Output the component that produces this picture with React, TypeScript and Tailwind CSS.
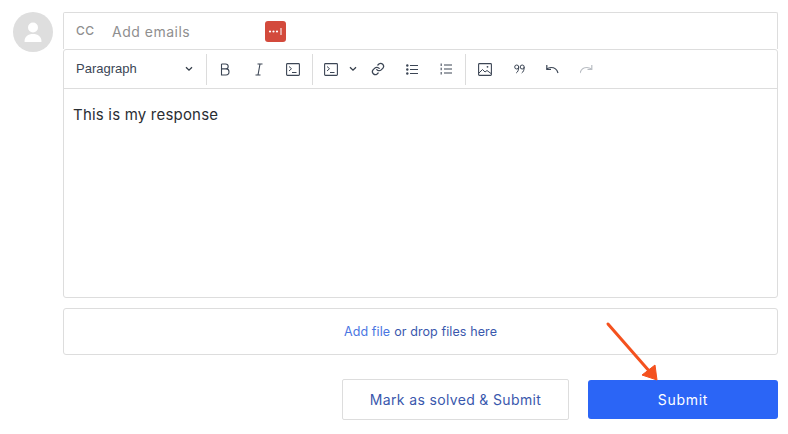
import type { ReactNode } from 'react'

const font = { fontFamily: 'Inter, "Open Sans", sans-serif' }

function ToolButton({ children }: { children: ReactNode }) {
  return <div className="w-[34px] h-full flex items-center justify-center text-[#3c4655]">{children}</div>
}

function Divider() {
  return <div className="w-px h-[31px] mx-[1px] bg-[#dcdcdc]" />
}

function Chevron() {
  return (
    <svg width="8" height="6" viewBox="0 0 8 6" fill="none">
      <path d="M1 1.2L4 4.2L7 1.2" stroke="#333c48" strokeWidth="1.3" />
    </svg>
  )
}

function TerminalIcon() {
  return (
    <svg width="14" height="13" viewBox="0 0 14 13" fill="none" stroke="currentColor">
      <rect x="0.6" y="0.6" width="12.8" height="11.8" rx="0.8" strokeWidth="1.1" />
      <path d="M3 3.5L5.5 5.7L3 8" strokeWidth="1" />
      <path d="M6 9.5H10.5" strokeWidth="1" />
    </svg>
  )
}

export default function App() {
  return (
    <div className="w-[788px] h-[434px] bg-white relative overflow-hidden pt-3 pl-[13px] pr-[10px] flex gap-[10px]" style={font}>
      {/* Avatar */}
      <div className="w-10 h-10 rounded-full bg-[#dedede] flex items-center justify-center shrink-0">
        <svg width="20" height="22" viewBox="0 0 20 22" fill="white">
          <circle cx="10" cy="6.5" r="5" />
          <path d="M1.5 20.5C1.5 15.5 5 13 10 13C15 13 18.5 15.5 18.5 20.5C18.5 21 18 21 17.5 21H2.5C2 21 1.5 21 1.5 20.5Z" />
        </svg>
      </div>

      <div className="flex-1 flex flex-col">
        {/* CC row */}
        <div className="h-[37px] border border-b-0 border-[#dddddd] flex items-center pl-[12px] rounded-t-[2px]">
          <span className="text-[12px] font-medium text-[#8f8f8f] tracking-[0.5px] w-[36px]">CC</span>
          <span className="text-[14px] text-[#8f8f8f] tracking-[0.5px] w-[153px]">Add emails</span>
          <div className="w-[21px] h-[21px] rounded-[3px] bg-[#d34a3c] flex items-center justify-center">
            <svg width="15" height="7" viewBox="0 0 15 7" fill="white">
              <circle cx="2" cy="3.5" r="1.1" />
              <circle cx="5.5" cy="3.5" r="1.1" />
              <circle cx="9" cy="3.5" r="1.1" />
              <rect x="12.5" y="0" width="1" height="7" />
            </svg>
          </div>
        </div>

        {/* Editor */}
        <div className="h-[249px] border border-[#dddddd] rounded-[3px] flex flex-col">
          <div className="h-[39px] border-b border-[#dddddd] flex items-center shrink-0">
            <div className="w-[141px] flex items-center justify-between pl-[12px] pr-[12px]">
              <span className="text-[13px] text-[#3c4655]" style={{ fontFamily: '"Liberation Sans", sans-serif' }}>Paragraph</span>
              <Chevron />
            </div>
            <Divider />
            <ToolButton>
              <svg width="10" height="13" viewBox="0 0 10 13" fill="none" stroke="currentColor" strokeWidth="1.1">
                <path d="M1.5 1H5.5C7.3 1 8.2 2 8.2 3.4C8.2 4.9 7.2 5.9 5.5 5.9H1.5M1.5 5.9H6C8 5.9 9 7.1 9 8.8C9 10.6 7.8 12 6 12H1.5V1Z" />
              </svg>
            </ToolButton>
            <ToolButton>
              <svg width="8" height="13" viewBox="0 0 8 13" fill="none" stroke="currentColor" strokeWidth="1.1">
                <path d="M2.5 1H7.5M0.5 12H5.5M5 1L3 12" />
              </svg>
            </ToolButton>
            <ToolButton><TerminalIcon /></ToolButton>
            <div className="w-[1px]" />
            <Divider />
            <div className="w-[47px] h-full flex items-center text-[#3c4655]">
              <div className="w-[34px] flex justify-center"><TerminalIcon /></div>
              <div className="ml-[1px] flex"><Chevron /></div>
            </div>
            <ToolButton>
              <svg width="14" height="14" viewBox="0 0 24 24" fill="none" stroke="currentColor" strokeWidth="2.2" strokeLinecap="round">
                <path d="M10 13a5 5 0 0 0 7.5.5l3-3a5 5 0 0 0-7-7l-1.7 1.7" />
                <path d="M14 11a5 5 0 0 0-7.5-.5l-3 3a5 5 0 0 0 7 7l1.7-1.7" />
              </svg>
            </ToolButton>
            <ToolButton>
              <svg width="12" height="11" viewBox="0 0 12 11" fill="currentColor">
                <circle cx="1.3" cy="1.5" r="1.2" />
                <circle cx="1.3" cy="5.5" r="1.2" />
                <circle cx="1.3" cy="9.5" r="1.2" />
                <rect x="4" y="1" width="8" height="1" />
                <rect x="4" y="5" width="8" height="1" />
                <rect x="4" y="9" width="8" height="1" />
              </svg>
            </ToolButton>
            <ToolButton>
              <svg width="12" height="12" viewBox="0 0 12 12" fill="currentColor">
                <rect x="0.5" y="0.5" width="1.5" height="2.5" opacity="0.7" />
                <rect x="0.5" y="4.7" width="1.5" height="2.5" opacity="0.7" />
                <rect x="0.5" y="9" width="1.5" height="2.5" opacity="0.7" />
                <rect x="4" y="1.5" width="8" height="1" />
                <rect x="4" y="5.5" width="8" height="1" />
                <rect x="4" y="9.5" width="8" height="1" />
              </svg>
            </ToolButton>
            <div className="w-[1px]" />
            <Divider />
            <div className="w-[1px]" />
            <ToolButton>
              <svg width="14" height="13" viewBox="0 0 14 13" fill="none" stroke="currentColor">
                <rect x="0.6" y="0.6" width="12.8" height="11.8" rx="0.8" strokeWidth="1.1" />
                <path d="M1 10L4.5 6.5L7 9L9 7.5L13 10.5" strokeWidth="1" />
                <circle cx="9.5" cy="3.8" r="0.9" fill="currentColor" stroke="none" />
              </svg>
            </ToolButton>
            <ToolButton>
              <svg width="11" height="10" viewBox="0 0 11 10" fill="none" stroke="currentColor" strokeWidth="1">
                <circle cx="2.7" cy="3" r="2" />
                <path d="M4.7 3C4.7 6 3.8 8 2.2 9" />
                <circle cx="8.2" cy="3" r="2" />
                <path d="M10.2 3C10.2 6 9.3 8 7.7 9" />
              </svg>
            </ToolButton>
            <ToolButton>
              <svg width="14" height="10" viewBox="0 0 14 10" fill="none" stroke="#3c4655" strokeWidth="1.2">
                <path d="M12 9C11 5.5 8.5 3.5 5 3.5C3.5 3.5 2 4 0.8 5" />
                <path d="M0.8 1V5.3H5" />
              </svg>
            </ToolButton>
            <ToolButton>
              <svg width="14" height="10" viewBox="0 0 14 10" fill="none" stroke="#b9bdc3" strokeWidth="1.2">
                <path d="M0 9C1 5.5 3.5 3.5 7 3.5C8.5 3.5 10 4 11.5 5" />
                <path d="M11.8 1V5.3H7.5" />
              </svg>
            </ToolButton>
          </div>
          <div className="pt-[16px] pl-[9px] text-[15px] leading-5 tracking-[0.2px] text-[#2a2e33]">This is my response</div>
        </div>

        {/* Attachments */}
        <div className="mt-[10px] h-[47px] pt-[1px] border border-[#dddddd] rounded-[3px] flex items-center justify-center text-[12.5px] tracking-[0.1px]">
          <span className="text-[#4a76e2]">Add file</span>
          <span className="text-[#3a58ad] ml-1">or drop files here</span>
        </div>

        {/* Actions */}
        <div className="mt-6 flex justify-end items-center gap-[19px]">
          <button className="w-[227px] h-[41px] border border-[#dddddd] rounded-[2px] bg-white text-[14px] tracking-[0.35px] text-[#3a58ad]">
            Mark as solved &amp; Submit
          </button>
          <button className="w-[190px] h-[39px] rounded-[3px] bg-[#2b65f6] text-[14px] tracking-[0.7px] text-white">
            Submit
          </button>
        </div>
      </div>

      {/* Annotation arrow */}
      <svg className="absolute left-[600px] top-[315px]" width="65" height="72" viewBox="0 0 65 72" fill="none">
        <path d="M8 9L50 57" stroke="#f4511e" strokeWidth="3" strokeLinecap="round" />
        <path d="M57 65L42 60L55 50Z" fill="#f4511e" stroke="#f4511e" strokeLinejoin="round" />
      </svg>
    </div>
  )
}
